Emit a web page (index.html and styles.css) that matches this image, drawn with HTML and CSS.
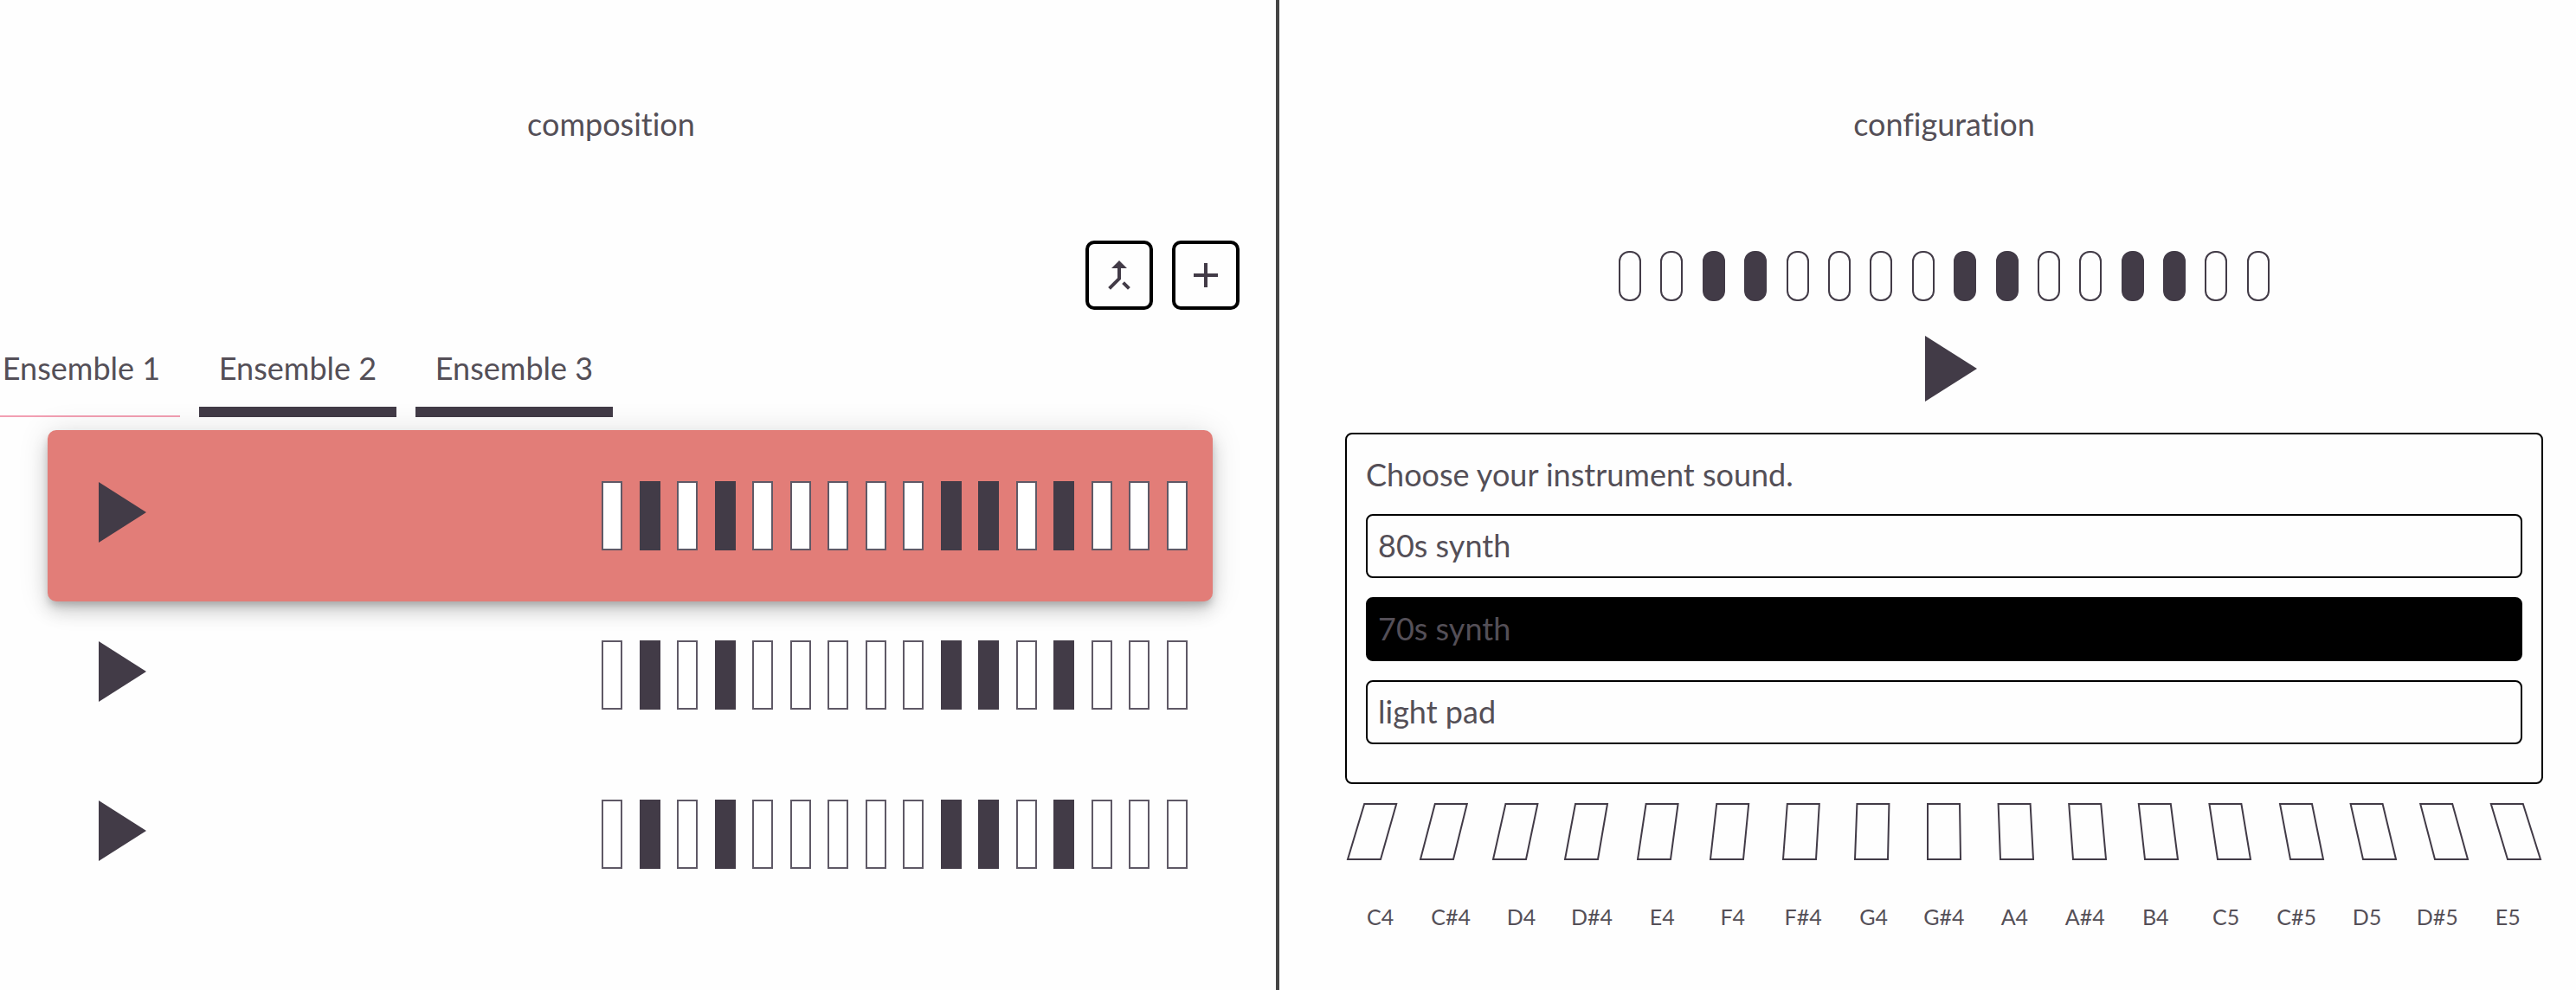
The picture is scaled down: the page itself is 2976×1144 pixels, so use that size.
FILE: index.html
```html
<!DOCTYPE html>
<html lang="en">
<head>
<meta charset="utf-8">
<meta name="viewport" content="width=device-width, initial-scale=1">
<title>Composition</title>
<link rel="stylesheet" href="styles.css">
</head>
<body>
<main class="workspace">
  <section class="panel composition">
    <h1 class="title">composition</h1>
    <div class="toolbar">
      <button class="tool" type="button" aria-label="Merge"><svg class="icon" viewBox="0 0 24 24"><path d="M17 20.41L18.41 19 15 15.59 13.59 17 17 20.41zM7.5 8H11v5.59L5.59 19 7 20.41l6-6V8h3.5L12 3.5 7.5 8z"/></svg></button>
      <button class="tool" type="button" aria-label="Add"><svg class="icon" viewBox="0 0 24 24"><path d="M19 13h-6v6h-2v-6H5v-2h6V5h2v6h6v2z"/></svg></button>
    </div>
    <nav class="tabs">
      <button class="tab current" type="button">Ensemble 1</button>
      <button class="tab" type="button">Ensemble 2</button>
      <button class="tab" type="button">Ensemble 3</button>
    </nav>
    <div class="tracks" id="tracks"></div>
  </section>

  <section class="panel configuration">
    <h1 class="title">configuration</h1>
    <div class="pills" id="pills"></div>
    <button class="play preview" type="button" aria-label="Play pattern"><svg class="play-large" viewBox="0 0 60 76"><path d="M0 0L60 38L0 76z"/></svg></button>
    <div class="instruments">
      <p class="prompt">Choose your instrument sound.</p>
      <button class="option" type="button" aria-pressed="false">80s synth</button>
      <button class="option" type="button" aria-pressed="true">70s synth</button>
      <button class="option" type="button" aria-pressed="false">light pad</button>
    </div>
    <div class="keys" id="keys"></div>
    <div class="notes" id="notes"></div>
  </section>
</main>
<script src="app.js"></script>
</body>
</html>
```
FILE: styles.css
```css
* {
  box-sizing: border-box;
}

body {
  margin: 0;
  background: #fefefe;
  color: #544f57;
  font-family: Lato, "Open Sans", sans-serif;
  font-size: 36px;
  line-height: 48px;
  font-variant-ligatures: none;
  overflow-x: hidden;
}

button {
  margin: 0;
  padding: 0;
  border: 0;
  background: none;
  color: inherit;
  font: inherit;
  font-variant-ligatures: none;
  cursor: pointer;
}

svg {
  display: block;
  fill: #423b47;
}

.workspace {
  display: grid;
  grid-template-columns: 739fr 749fr;
  min-height: 100vh;
}

.panel {
  display: flex;
  flex-direction: column;
  padding-top: 119px;
}

.composition {
  margin-left: -20px;
  padding-right: 42px;
  border-right: 4px solid #444;
}

.configuration {
  padding-left: 76px;
  padding-right: 38px;
}

.title {
  margin: 0;
  font-size: 36px;
  font-weight: 400;
  text-align: center;
}

.toolbar {
  display: flex;
  justify-content: flex-end;
  gap: 22px;
  margin-top: 111px;
}

.tool {
  padding: 12px 11px;
  border: 4px solid #000;
  border-radius: 10px;
}

.icon {
  width: 48px;
  height: 48px;
}

.tabs {
  display: flex;
  gap: 22px;
  margin-top: 36px;
}

.tab {
  display: flex;
  justify-content: center;
  width: 228px;
  height: 88px;
  padding-top: 7px;
  border-bottom: 12px solid #423b47;
}

.tab.current {
  border-bottom: 2px solid #f29fb2;
}

.tracks {
  padding: 15px 31px 0 75px;
}

.track {
  display: flex;
  align-items: center;
  justify-content: space-between;
  height: 184px;
  padding: 0 29px 0 59px;
  border-radius: 10px;
}

.track.active {
  height: 198px;
  background: #e27d78;
  box-shadow: 0 6px 10px -2px rgba(0, 0, 0, .2), 0 12px 20px 0 rgba(0, 0, 0, .14), 0 2px 36px 0 rgba(0, 0, 0, .12);
}

.track.active + .track {
  margin-top: -7px;
}

.play-small {
  width: 55px;
  height: 70px;
}

.track .play {
  padding-bottom: 8px;
}

.steps {
  display: flex;
  justify-content: space-between;
  width: 677px;
}

.step {
  width: 24px;
  height: 80px;
  border: 2px solid #5f5966;
  background: #fff;
}

.pills {
  display: flex;
  justify-content: space-between;
  align-self: center;
  width: 752px;
  margin-top: 123px;
}

.pill {
  width: 26px;
  height: 58px;
  border: 2px solid #423b47;
  border-radius: 12px;
}

.step[aria-pressed="true"],
.pill[aria-pressed="true"] {
  border-color: #423b47;
  background: #423b47;
}

.preview {
  align-self: center;
  margin-top: 40px;
  padding-left: 16px;
}

.play-large {
  width: 60px;
  height: 76px;
}

.instruments {
  display: flex;
  flex-direction: column;
  gap: 22px;
  margin-top: 36px;
  padding: 22px 22px 44px;
  border: 2px solid #000;
  border-radius: 8px;
}

.prompt {
  margin: 0;
}

.option {
  height: 74px;
  padding: 0 12px 2px;
  border: 2px solid #000;
  border-radius: 8px;
  text-align: left;
}

.option[aria-pressed="true"] {
  background: #000;
}

.keys {
  display: flex;
  justify-content: space-between;
  margin-top: 22px;
  padding: 0 2px;
}

.key-shape {
  width: 40px;
  height: 66px;
  overflow: visible;
  fill: none;
  stroke: #423b47;
  stroke-width: 2px;
}

.notes {
  display: grid;
  grid-template-columns: repeat(17, 1fr);
  margin-top: 47px;
  font-size: 25px;
  line-height: 36px;
  text-align: center;
}
```
FILE: app.js
```js
const stepButtons = (pattern, name) => [...pattern].map((c, i) =>
  `<button class="${name}" type="button" aria-label="Step ${i + 1}" aria-pressed="${c === 'x'}"></button>`).join('');

document.getElementById('tracks').innerHTML = [0, 1, 2].map(i =>
  `<div class="track${i === 0 ? ' active' : ''}">
    <button class="play" type="button" aria-label="Play track ${i + 1}"><svg class="play-small" viewBox="0 0 55 70"><path d="M0 0L55 35L0 70z"/></svg></button>
    <div class="steps">${stepButtons('.x.x.....xx.x...', 'step')}</div>
  </div>`).join('');

document.getElementById('pills').innerHTML = stepButtons('..xx....xx..xx..', 'pill');

const notes = ['C4', 'C#4', 'D4', 'D#4', 'E4', 'F4', 'F#4', 'G4', 'G#4', 'A4', 'A#4', 'B4', 'C5', 'C#5', 'D5', 'D#5', 'E5'];

// Keys lean towards the middle of the keyboard.
document.getElementById('keys').innerHTML = notes.map((note, i) => {
  const lean = (8 - i) * 2.4;
  return `<button class="key" type="button" aria-label="${note}"><svg class="key-shape" viewBox="0 0 40 66"><path d="M${1 + lean} 1H${38 + lean}L39 65H1z"/></svg></button>`;
}).join('');

document.getElementById('notes').innerHTML = notes.map(note => `<span>${note}</span>`).join('');
```
